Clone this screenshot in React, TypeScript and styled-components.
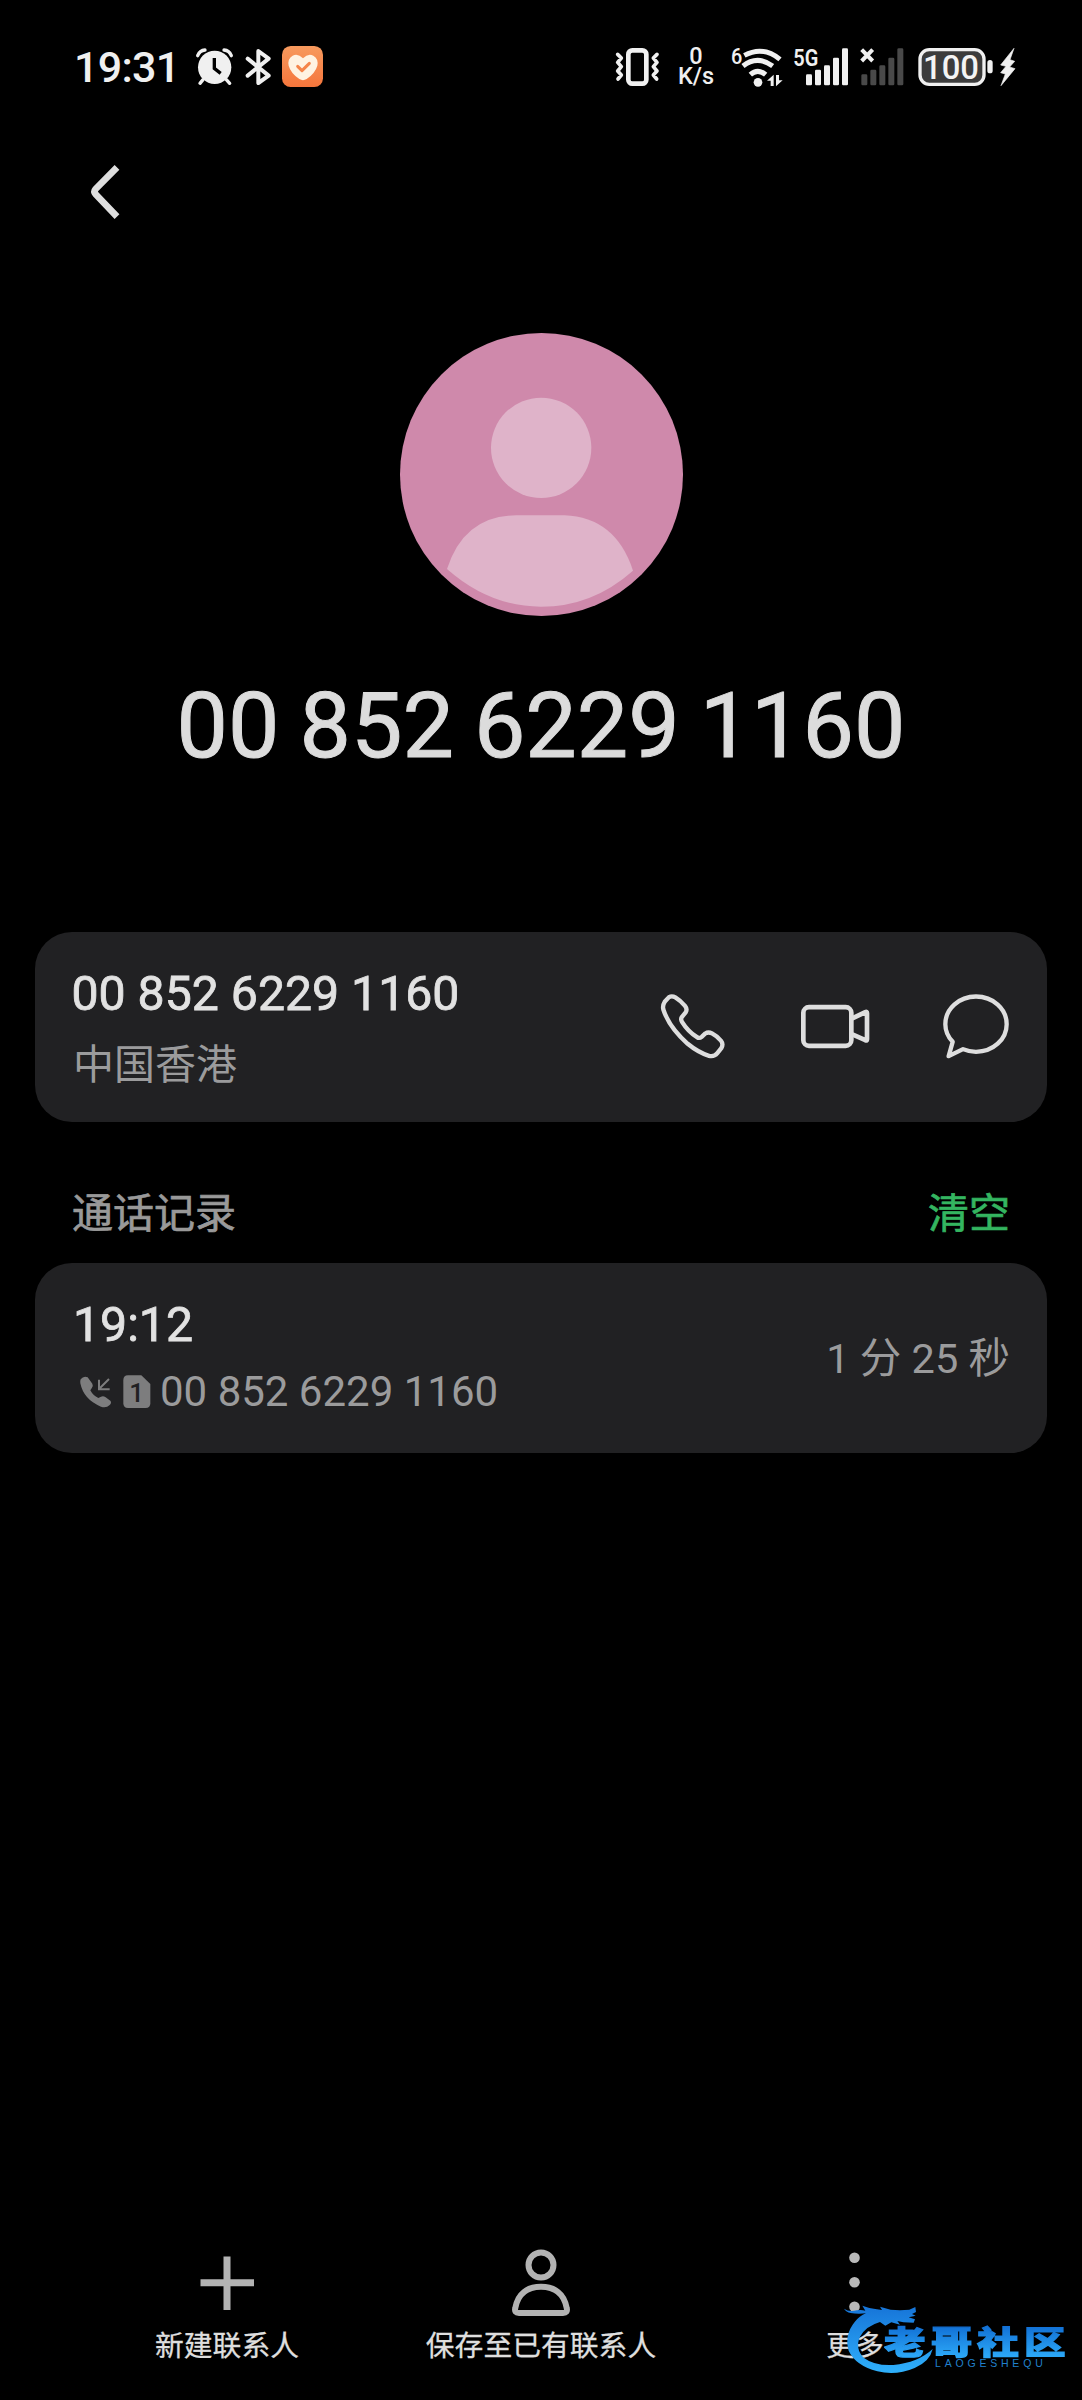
import React from "react";
import styled, { createGlobalStyle } from "styled-components";

const Global = createGlobalStyle`
  * { box-sizing: border-box; }
  html, body { margin: 0; background: #000; }
  body { font-family: Roboto, "Noto Sans CJK SC", sans-serif; }
`;

const Screen = styled.main`
  position: relative;
  display: flex;
  flex-direction: column;
  width: 1082px;
  height: 2400px;
  background: #000;
  color: #e0e0e0;
  overflow: hidden;
`;

const Glyph = styled.svg`
  display: block;
  flex: none;
  overflow: visible;
`;

const Gap = styled.span<{ $w: number }>`
  flex: none;
  width: ${(p) => p.$w}px;
`;

/* ---------- status bar ---------- */
const StatusBar = styled.header`
  display: flex;
  justify-content: space-between;
  align-items: center;
  height: 133px;
  padding: 0 65px 0 74px;
  color: #f0f0f0;
`;

const StatusGroup = styled.div`
  display: flex;
  align-items: center;
`;

const Clock = styled.span`
  width: 122px;
  font-size: 43px;
  line-height: 50px;
  font-weight: 500;
  letter-spacing: -0.7px;
  white-space: nowrap;
`;

const Speed = styled.div`
  display: flex;
  flex-direction: column;
  align-items: center;
  width: 38px;
  margin: 0 15px 0 17px;
  font-size: 23.5px;
  line-height: 19.5px;
  font-weight: 500;
  white-space: nowrap;
`;

/* ---------- header ---------- */
const TopBar = styled.nav`
  display: flex;
  align-items: center;
  height: 117px;
  padding-left: 87px;
`;

const BackButton = styled.button`
  padding: 0;
  border: 0;
  background: none;
`;

const Profile = styled.section`
  display: flex;
  flex-direction: column;
  align-items: center;
  padding-top: 83px;
  height: 682px;
`;

const ProfileName = styled.h1`
  margin: 57px 0 0;
  font-size: 91.5px;
  line-height: 106px;
  font-weight: 400;
  word-spacing: -2.6px;
  color: #dcdcdc;
  -webkit-text-stroke: 1px #dcdcdc;
  white-space: nowrap;
`;

/* ---------- cards ---------- */
const Card = styled.section`
  display: flex;
  justify-content: space-between;
  align-items: center;
  height: 189.5px;
  margin: 0 35px;
  padding: 0 37px 0 38px;
  border-radius: 37px;
  background: #212123;
`;

const CardText = styled.div`
  display: flex;
  flex-direction: column;
`;

const Primary = styled.div<{ $height: number; $indent?: number }>`
  margin-left: ${(p) => p.$indent ?? 0}px;
  font-size: 48.2px;
  line-height: ${(p) => p.$height}px;
  font-weight: 400;
  -webkit-text-stroke: 0.8px #e2e2e2;
  color: #e2e2e2;
  white-space: nowrap;
`;

const Secondary = styled.div`
  display: flex;
  align-items: center;
  padding-top: 2px;
  font-size: 41px;
  line-height: 64px;
  color: #9b9b9c;
  white-space: nowrap;
`;

const LogNumber = styled.span`
  margin-left: 9px;
  font-size: 42px;
`;

const Actions = styled.div`
  display: flex;
  gap: 74px;
`;

const Duration = styled.div`
  padding-top: 2px;
  font-size: 41.5px;
  line-height: 60px;
  color: #9b9b9c;
  white-space: nowrap;
`;

const SectionHead = styled.div`
  display: flex;
  justify-content: space-between;
  align-items: center;
  height: 141.5px;
  padding: 44px 72px 0 72px;
  font-size: 41px;
  line-height: 60px;
`;

const SectionTitle = styled.h2`
  margin: 0;
  font: inherit;
  color: #999;
  -webkit-text-stroke: 0.7px #999;
`;

const ClearButton = styled.button`
  padding: 0;
  border: 0;
  background: none;
  font: inherit;
  color: #34b560;
  -webkit-text-stroke: 0.7px #34b560;
`;

/* ---------- bottom bar ---------- */
const BottomBar = styled.footer`
  display: grid;
  grid-template-columns: repeat(3, 314px);
  justify-content: center;
  margin-top: auto;
  height: 160px;
`;

const BottomItem = styled.button`
  display: flex;
  flex-direction: column;
  align-items: center;
  gap: 1.5px;
  padding: 6px 0 0;
  border: 0;
  background: none;
  font-family: inherit;
  font-size: 28.8px;
  line-height: 44px;
  color: #dedede;
  -webkit-text-stroke: 0.3px #dedede;
`;

/* ---------- watermark ---------- */
const Watermark = styled.div`
  position: absolute;
  left: 840px;
  top: 2300px;
  width: 242px;
  height: 80px;
`;

const WatermarkArt = styled(Glyph)`
  position: absolute;
  left: 0;
  top: 0;
`;

const WatermarkName = styled.div`
  position: absolute;
  left: 44px;
  top: 18px;
  font-family: "Noto Sans CJK SC", sans-serif;
  font-size: 32px;
  line-height: 44px;
  font-weight: 900;
  letter-spacing: 3.9px;
  white-space: nowrap;
  transform: scaleX(1.3);
  transform-origin: left;
  color: transparent;
  -webkit-text-stroke: 1.2px transparent;
  background: linear-gradient(#1271d6 20%, #2ba6f6 85%);
  background-clip: text;
  -webkit-background-clip: text;
`;

const WatermarkSub = styled.div`
  position: absolute;
  left: 95px;
  top: 57px;
  font-family: "Liberation Sans", sans-serif;
  font-size: 10.5px;
  line-height: 12px;
  letter-spacing: 3.8px;
  color: #2080cc;
  white-space: nowrap;
`;

const BAR_TOPS = [78, 64, 51, 28, 0];

const SignalBars = ({ x, color }: { x: number; color: string }) => (
  <g fill={color}>
    {BAR_TOPS.map((top, i) => (
      <rect key={top} x={x + i * 27} y={top} width="18" height={111 - top} rx="4" />
    ))}
  </g>
);

const AlarmIcon = () => (
  <Glyph width="37" height="38" viewBox="407 54 111 114">
    <circle cx="463" cy="112" r="50" fill="#f0f0f0" />
    <path d="M412 77Q418 61 434 60M513 77Q507 61 491 60M428 149l-9 11M498 149l10 11" stroke="#f0f0f0" strokeWidth="10" strokeLinecap="round" fill="none" />
    <path d="M462 84v31l19 15" stroke="#000" strokeWidth="10" fill="none" />
  </Glyph>
);

const BluetoothIcon = () => (
  <Glyph width="26" height="38" viewBox="555 50 78 114">
    <path d="M563 82L626 133L595 155V59L626 82L563 133" stroke="#f0f0f0" strokeWidth="12" strokeLinecap="round" strokeLinejoin="round" fill="none" />
  </Glyph>
);

const HealthIcon = () => (
  <Glyph width="41" height="41" viewBox="664 48 123 123">
    <defs>
      <linearGradient id="health" x1="0" y1="0" x2="0" y2="1">
        <stop offset="0" stopColor="#f79a5e" />
        <stop offset="1" stopColor="#f5763c" />
      </linearGradient>
    </defs>
    <rect x="664" y="48" width="123" height="123" rx="26" fill="url(#health)" />
    <path d="M727 85Q712 69 696 77Q680 86 684 107Q690 129 716 147Q727 154 738 147Q764 129 770 107Q774 86 758 77Q742 69 727 85Z" fill="#fff3e2" />
    <path d="M711 109l13 13 22-22" stroke="#f5854a" strokeWidth="9" strokeLinecap="round" strokeLinejoin="round" fill="none" />
  </Glyph>
);

const VibrateIcon = () => (
  <Glyph width="45" height="38" viewBox="44 52 135 114">
    <rect x="84" y="59" width="54" height="100" rx="12" stroke="#f0f0f0" strokeWidth="14" fill="none" />
    <path d="M52 71l11 11-11 13 11 13-11 13 11 12-10 12M170 71l-11 11 11 13-11 13 11 13-11 12 10 12" stroke="#f0f0f0" strokeWidth="11" strokeLinecap="round" strokeLinejoin="round" fill="none" />
  </Glyph>
);

const WifiIcon = () => (
  <Glyph width="54" height="42" viewBox="388 42 162 126">
    <text x="391" y="96" fontSize="66" fontWeight="500" fill="#f0f0f0" textLength="34" lengthAdjust="spacingAndGlyphs">6</text>
    <g stroke="#f0f0f0" strokeWidth="15" fill="none">
      <path d="M431 70Q487 40 538 82" />
      <path d="M427 102Q470 68 516 102" />
      <path d="M449 128Q471 108 495 128" />
    </g>
    <circle cx="472" cy="151" r="13" fill="#f0f0f0" />
    <path d="M519 128v34h-9v-16h-11zM526 163v-34h9v16h11z" fill="#f0f0f0" />
  </Glyph>
);

const MobileSignal = () => (
  <Glyph width="58" height="38" viewBox="-42 -1 174 114">
    <text x="-41" y="53" fontSize="70" fontWeight="600" fill="#f0f0f0" textLength="75" lengthAdjust="spacingAndGlyphs">5G</text>
    <SignalBars x={-3} color="#f0f0f0" />
  </Glyph>
);

const NoSignal = () => (
  <Glyph width="45" height="38" viewBox="-1 -1 135 114">
    <path d="M4 4L37 38M37 4L4 38" stroke="#f0f0f0" strokeWidth="12" />
    <SignalBars x={3} color="#494949" />
  </Glyph>
);

const BatteryIcon = () => (
  <Glyph width="99" height="38" viewBox="323 51 297 114">
    <rect x="329" y="56" width="192" height="104" rx="28" fill="#3c3c3c" stroke="#f0f0f0" strokeWidth="10" />
    <text x="338" y="144" fontSize="101" fontWeight="500" fill="#f4f4f4" textLength="168" lengthAdjust="spacingAndGlyphs">100</text>
    <rect x="531" y="87" width="16" height="40" rx="8" fill="#f0f0f0" />
    <path d="M611 52L571 102L587 106L571 125L585 129L572 164L614 113L598 108L613 91L599 86Z" fill="#f0f0f0" stroke="#f0f0f0" strokeWidth="2" />
  </Glyph>
);

const Avatar = () => (
  <Glyph width="283" height="283" viewBox="59 70 849 849">
    <circle cx="483.5" cy="494.5" r="424.5" fill="#cf89ab" />
    <circle cx="482.5" cy="414.5" r="150.5" fill="#dfb3c9" />
    <path d="M200 778Q252 617 408 617H552Q706 623 758 783Q636 891 482 891Q328 891 200 778Z" fill="#dfb3c9" />
  </Glyph>
);

const PhoneIcon = () => (
  <Glyph width="67" height="71" viewBox="117 213.6 201 213">
    <path d="M147 232Q156 227 166 233Q182 243 195 258Q203 268 197 278L186 291Q181 298 186 306Q204 335 231 352Q238 357 245 351L256 341Q265 335 276 341Q293 350 303 363Q311 373 304 385L292 400Q282 412 267 408Q236 399 203 372Q147 322 130 269Q127 257 134 246Z" stroke="#dedede" strokeWidth="13" strokeLinejoin="round" fill="none" />
  </Glyph>
);

const VideoIcon = () => (
  <Glyph width="69" height="71" viewBox="540 213.6 207 213">
    <g stroke="#dedede" strokeWidth="14" strokeLinejoin="round" fill="none">
      <rect x="550" y="262" width="144" height="116" rx="17" />
      <path d="M697 296L736 277Q741 275 741 280V358Q741 364 736 361L697 344" />
    </g>
  </Glyph>
);

const MessageIcon = () => (
  <Glyph width="67" height="71" viewBox="969 213.6 201 213">
    <path d="M1029 388Q1047 396 1068 396C1119 396 1160 359 1160 313S1119 230 1068 230S976 267 976 313Q976 342 998 366L986 409Z" stroke="#dedede" strokeWidth="13" strokeLinejoin="round" fill="none" />
  </Glyph>
);

const IncomingIcon = () => (
  <Glyph width="40" height="34" viewBox="128 614 120 102">
    <path d="M151 627Q160 615 172 621L186 640Q190 647 184 654L180 660Q188 676 204 683L212 679Q219 676 226 681L240 691Q245 697 238 704Q228 714 212 709Q160 688 150 639Q149 632 151 627Z" fill="#7d7d7e" />
    <path d="M236 626L206 656M206 628V657H238" stroke="#7d7d7e" strokeWidth="6" fill="none" />
  </Glyph>
);

const SimIcon = () => (
  <Glyph width="30" height="34" viewBox="272 614 90 102">
    <path d="M293 615H333L360 641V699Q360 713 346 713H293Q279 713 279 699V629Q279 615 293 615Z" fill="#7d7d7e" />
    <text x="297" y="695" fontSize="78" fontWeight="500" fill="#212123">1</text>
  </Glyph>
);

const PlusIcon = () => (
  <Glyph width="72" height="76" viewBox="0 0 72 76">
    <path d="M36 10.5V64M9.5 36.7H63" stroke="#b3b3b3" strokeWidth="7" />
  </Glyph>
);

const PersonIcon = () => (
  <Glyph width="72" height="76" viewBox="0 0 72 76">
    <g stroke="#b3b3b3" strokeWidth="6" fill="none">
      <circle cx="36" cy="19" r="12.5" />
      <path d="M14 67H58Q63 67 61.7 62C59 47 49 40.8 36 40.8S13 47 10.3 62Q9 67 14 67Z" />
    </g>
  </Glyph>
);

const MoreIcon = () => (
  <Glyph width="72" height="76" viewBox="0 0 72 76">
    <g fill="#b9b9b9">
      <circle cx="35.5" cy="11.7" r="5.3" />
      <circle cx="35.5" cy="36.3" r="5.3" />
      <circle cx="35.5" cy="60.7" r="5.3" />
    </g>
  </Glyph>
);

/* Dragon ring: swirling body, horned head, tail sweeping under the name */
const DragonArt = () => (
  <WatermarkArt width="100" height="80" viewBox="150 210 300 240">
    <defs>
      <linearGradient id="dragon" x1="0" y1="0" x2="0" y2="1">
        <stop offset="0" stopColor="#1674d8" />
        <stop offset="1" stopColor="#2fb0fb" />
      </linearGradient>
    </defs>
    <path
      fill="url(#dragon)"
      d="M162 236Q176 246 200 241Q214 239 226 242L217 227Q238 235 256 237L276 240L270 230L302 239L330 241L358 239L376 231L378 246L366 252L377 257L356 262L375 268L371 278L340 277L322 273L330 284L304 277L286 287L270 276Q228 288 210 320Q194 356 222 384Q254 408 310 405Q384 398 428 357Q420 394 374 414Q318 438 262 424Q196 406 176 362Q162 316 194 276Q208 258 228 250Q202 253 182 249Q168 246 162 236Z"
    />
  </WatermarkArt>
);

export default function App() {
  return (
    <Screen>
      <Global />
      <StatusBar>
        <StatusGroup>
          <Clock>19:31</Clock>
          <AlarmIcon />
          <Gap $w={12} />
          <BluetoothIcon />
          <Gap $w={11} />
          <HealthIcon />
        </StatusGroup>
        <StatusGroup>
          <VibrateIcon />
          <Speed>
            <span>0</span>
            <span>K/s</span>
          </Speed>
          <WifiIcon />
          <Gap $w={9} />
          <MobileSignal />
          <Gap $w={9} />
          <NoSignal />
          <Gap $w={13} />
          <BatteryIcon />
        </StatusGroup>
      </StatusBar>

      <TopBar>
        <BackButton aria-label="返回">
          <Glyph width="36" height="60" viewBox="78 66 108 180">
            <path d="M168 82L104 147Q97 155 104 163L168 230" stroke="#dedede" strokeWidth="20" fill="none" />
          </Glyph>
        </BackButton>
      </TopBar>

      <Profile>
        <Avatar />
        <ProfileName>00 852 6229 1160</ProfileName>
      </Profile>

      <Card>
        <CardText>
          <Primary $height={74} $indent={-1.5}>00 852 6229 1160</Primary>
          <Secondary>中国香港</Secondary>
        </CardText>
        <Actions>
          <PhoneIcon />
          <VideoIcon />
          <MessageIcon />
        </Actions>
      </Card>

      <SectionHead>
        <SectionTitle>通话记录</SectionTitle>
        <ClearButton>清空</ClearButton>
      </SectionHead>

      <Card>
        <CardText>
          <Primary $height={66}>19:12</Primary>
          <Secondary>
            <IncomingIcon />
            <Gap $w={8} />
            <SimIcon />
            <LogNumber>00 852 6229 1160</LogNumber>
          </Secondary>
        </CardText>
        <Duration>1 分 25 秒</Duration>
      </Card>

      <BottomBar>
        <BottomItem>
          <PlusIcon />
          新建联系人
        </BottomItem>
        <BottomItem>
          <PersonIcon />
          保存至已有联系人
        </BottomItem>
        <BottomItem>
          <MoreIcon />
          更多
        </BottomItem>
      </BottomBar>

      <Watermark>
        <DragonArt />
        <WatermarkName>老哥社区</WatermarkName>
        <WatermarkSub>LAOGESHEQU</WatermarkSub>
      </Watermark>
    </Screen>
  );
}
